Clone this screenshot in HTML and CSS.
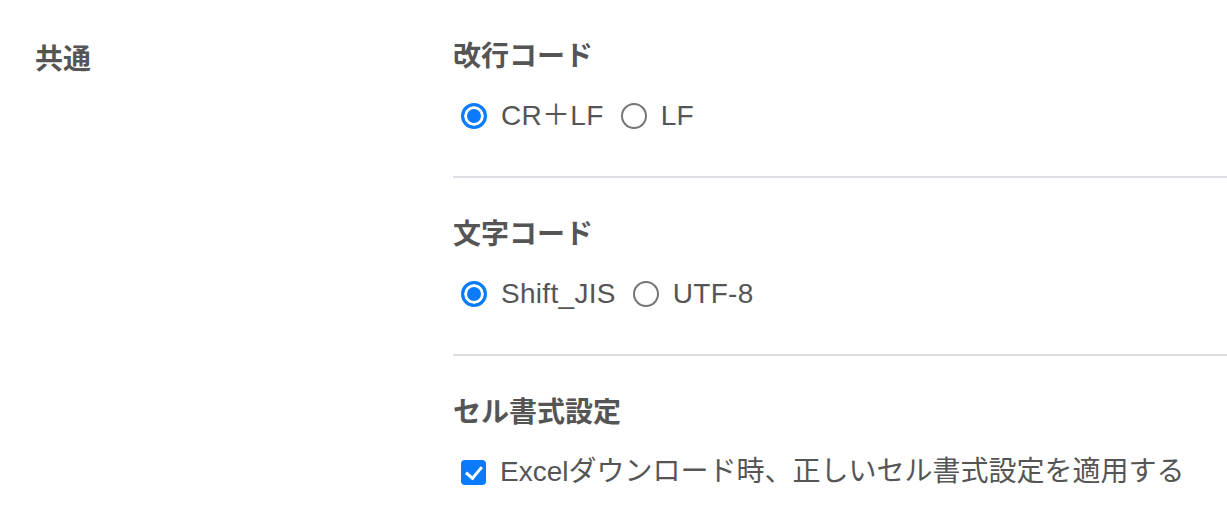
FILE: index.html
```html
<!DOCTYPE html>
<html lang="ja">
<head>
<meta charset="utf-8">
<link rel="stylesheet" href="styles.css">
</head>
<body>
<div class="settings">
  <div class="group-label">共通</div>
  <div class="group-body">
    <section class="section">
      <h3 class="section-title">改行コード</h3>
      <div class="options">
        <label class="option latin"><input type="radio" name="nl" class="radio" checked><span>CR＋LF</span></label>
        <label class="option latin"><input type="radio" name="nl" class="radio"><span>LF</span></label>
      </div>
    </section>
    <section class="section">
      <h3 class="section-title">文字コード</h3>
      <div class="options">
        <label class="option latin"><input type="radio" name="enc" class="radio" checked><span>Shift_JIS</span></label>
        <label class="option latin"><input type="radio" name="enc" class="radio"><span>UTF-8</span></label>
      </div>
    </section>
    <section class="section last">
      <h3 class="section-title">セル書式設定</h3>
      <div class="options">
        <label class="option"><input type="checkbox" class="check" checked><span>Excelダウンロード時、正しいセル書式設定を適用する</span></label>
      </div>
    </section>
  </div>
</div>
</body>
</html>
```
FILE: styles.css
```css
html, body {
  margin: 0;
  padding: 0;
  background: #fff;
}
body {
  font-family: "Liberation Sans", "Noto Sans CJK JP", sans-serif;
  font-size: 28px;
  line-height: 42px;
  color: #555;
}
.settings {
  display: flex;
  padding-left: 35px;
}
.group-label {
  width: 418px;
  flex: none;
  padding-top: 39px;
  font-weight: bold;
}
.group-body {
  flex: 1;
}
.section {
  padding: 36px 0 39px;
  border-bottom: 2px solid #dcdfe3;
}
.section.last {
  border-bottom: none;
}
.section-title {
  margin: 0 0 17px;
  font-size: 28px;
  line-height: 42px;
  font-weight: bold;
}
.options {
  display: flex;
  align-items: center;
  padding-left: 8px;
}
.option {
  display: inline-flex;
  align-items: center;
  gap: 14px;
  margin-right: 17px;
}
.option.latin {
  letter-spacing: 0.3px;
}
.radio {
  appearance: none;
  -webkit-appearance: none;
  margin: 0;
  width: 26px;
  height: 26px;
  border-radius: 50%;
  border: 2px solid #757575;
  background: #fff;
  box-sizing: border-box;
}
.radio:checked {
  border: 3px solid #0a7bff;
  background: #0a7bff;
  box-shadow: inset 0 0 0 3px #fff;
}
.check {
  appearance: none;
  -webkit-appearance: none;
  margin: 0;
  width: 25px;
  height: 25px;
  border-radius: 4px;
  background: #0a7bff;
  position: relative;
}
.check::after {
  content: "";
  position: absolute;
  left: 8px;
  top: 3px;
  width: 7px;
  height: 13px;
  border: solid #fff;
  border-width: 0 3.5px 3.5px 0;
  transform: rotate(40deg);
}
```
